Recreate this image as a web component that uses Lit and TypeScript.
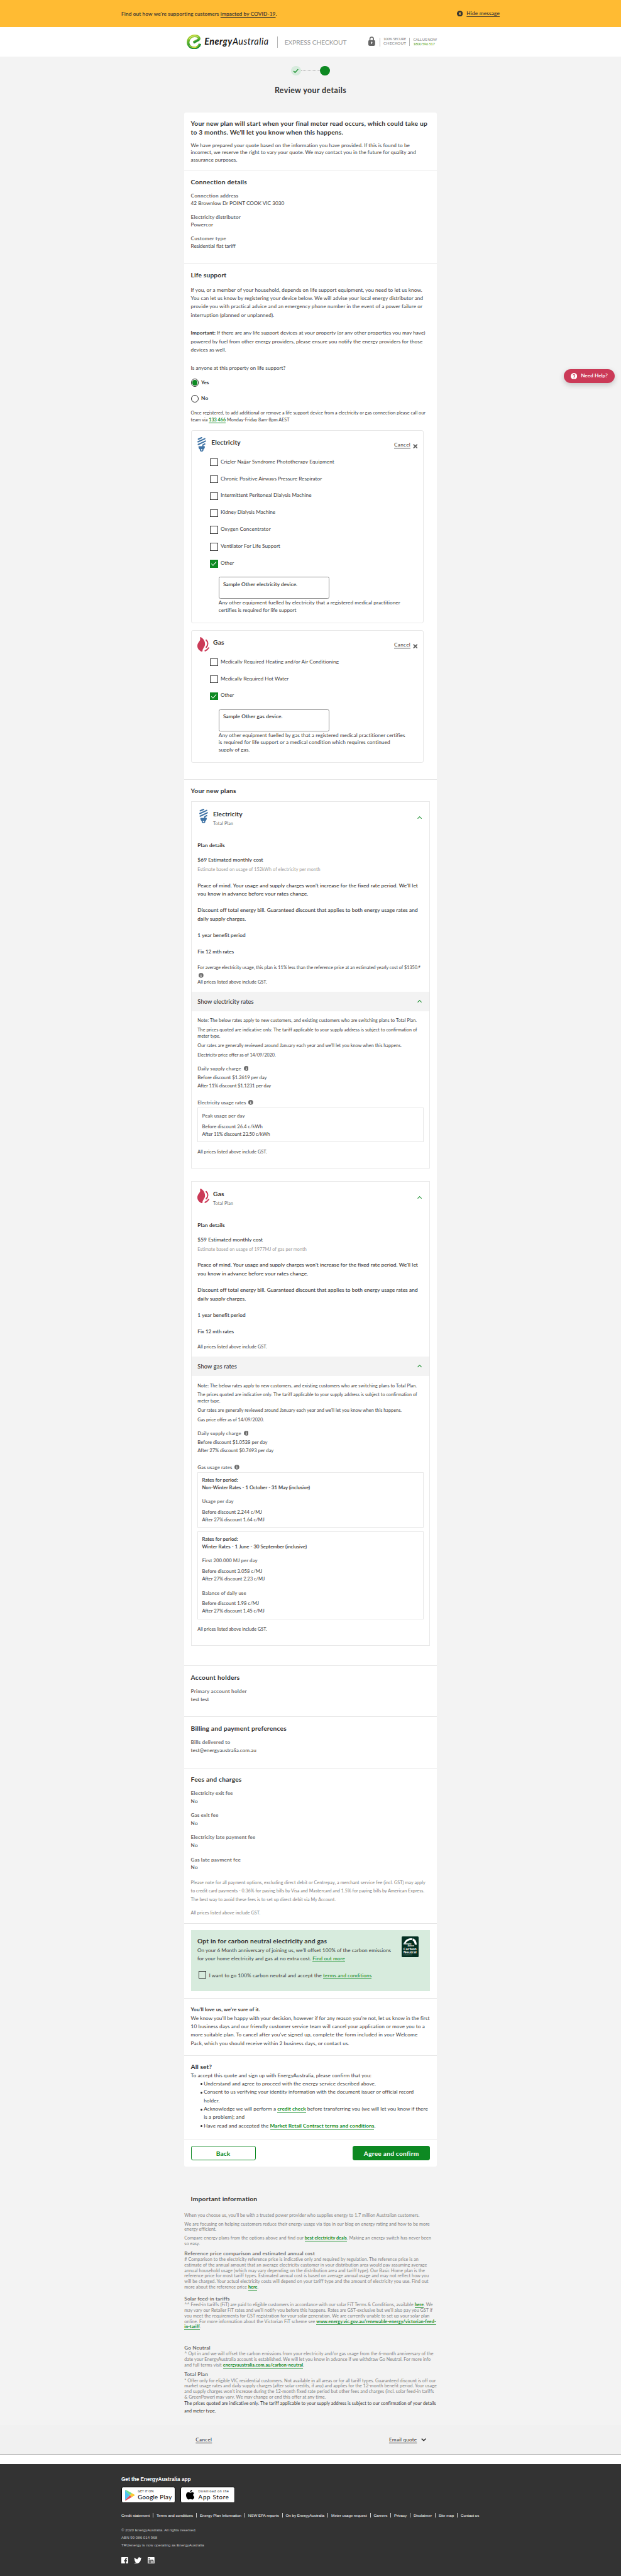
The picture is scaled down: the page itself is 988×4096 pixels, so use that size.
import { LitElement, html, css, svg, nothing, TemplateResult } from "lit";
import { customElement } from "lit/decorators.js";

type Content = string | TemplateResult;
type Line = [number, Content];

/** One line of copy with the measure it is set to. */
const fit = (w: number, content: Content, cls = "") =>
  html`<span class="fit ${cls}" data-w=${w}>${content}</span>`;
const lines = (cls: string, rows: Line[]) =>
  html`<p class=${cls}>${rows.map(([w, c]) => fit(w, c, "line"))}</p>`;

const plugIcon = html`<svg class="plug" viewBox="0 0 27 45">
  <g fill="none" stroke="#3f73a5" stroke-width="4" stroke-linecap="round" stroke-linejoin="round">
    <path d="M3.2 6.3 13.2 2M2.2 14.6 23 5M3 22.8 25 12.4M17 30v-5.5l6-3.2" />
    <circle cx="13.2" cy="39.3" r="3.9" stroke-width="3.6" />
  </g>
  <path fill="#3f73a5" d="M5 28h17q1.4 0 1.3 1.5c-.3 4.500-2.500 8-5.500 9H8.700c-3-1-5.200-4.500-5.300-9Q3.400 28 5 28z" />
  <path fill="#fff" d="M11.400 37.500h3.700v2.800q-1.800 2-3.700 0z" />
</svg>`;
const flameIcon = html`<svg class="flame" viewBox="0 0 37 45">
  <path fill="#cb3a57" d="M9.300.3C7.500 1 8.500 4 8.600 6.500 8.700 13 0 17 0 27.500 0 36 6.500 41.500 12.500 44.600c1.800.8 3.300.2 3.400-1.800C16.200 35 23.700 31 23.700 22 23.700 11 17.500 4.200 11.500.5 10.700.1 10 0 9.300.3z" />
  <path fill="none" stroke="#cb3a57" stroke-width="4" stroke-linecap="round" d="M27.300 9.200c6.200 6 6.200 15 .3 22.200M34.800 33.500c-2.800 4.200-6.200 7-10.500 8.800" />
</svg>`;
const infoIcon = html`<svg class="info" viewBox="0 0 16 16"><circle cx="8" cy="8" r="8" fill="#6b6b6b" /><path fill="#fff" d="M6.900 3h2.300v2.200H6.900zM6.200 6.600h3v4.600h.9v1.500H6v-1.500h.9V8.100h-.7z" /></svg>`;
const chevronUp = html`<svg class="chev" viewBox="0 0 14 8"><path d="M1 7.200 7 1.400l6 5.800" fill="none" stroke="#0d8922" stroke-width="2" /></svg>`;
const checkMark = svg`<path d="M4.500 12.500 9.500 17.500 19.500 6.500" fill="none" stroke="#fff" stroke-width="2" />`;

const box = (on: boolean) =>
  html`<span class="box ${on ? "on" : ""}">${on ? html`<svg viewBox="0 0 24 24">${checkMark}</svg>` : nothing}</span>`;

const field = (lw: number, label: string, vw: number, value: string) => html`
  <div class="field"><div class="label">${fit(lw, label)}</div><div>${fit(vw, value)}</div></div>`;

const device = (
  icon: TemplateResult, name: string, nameW: number,
  options: Line[], sampleW: number, sample: string, help: Line[]
) => html`
  <div class="device">
    <div class="device-head">
      ${icon}
      <h2>${fit(nameW, name)}</h2>
      <a class="cancel">${fit(50, html`<span class="u">Cancel</span>`)}</a>
      <svg class="cross" viewBox="0 0 15 14"><path d="M1.500 1 13.500 13M13.500 1 1.500 13" stroke="#666" stroke-width="3.400" /></svg>
    </div>
    <div class="options">
      ${options.map(([w, t], i) => html`<label class="option">${box(i === options.length - 1)}${fit(w, t)}</label>`)}
    </div>
    <div class="entry">${fit(sampleW, sample)}</div>
    ${lines("help", help)}
  </div>`;

interface Rate { title: Line; before: Line; after: Line }
interface Period { name?: Line; rates: Rate[] }
interface Plan {
  icon: TemplateResult; name: Line; cost: Line; estimate: Line; reference?: Content;
  show: Line; offer: Line; before: Line; after: Line; usage: Line; periods: Period[];
}

const gst = (w = 214.5) => fit(w, "All prices listed above include GST.", "line");

const plan = (p: Plan) => html`
  <div class="plan">
    <div class="plan-head">
      <div class="plan-icon">${p.icon}</div>
      <div><h2>${fit(...p.name)}</h2><div class="sub">${fit(62, "Total Plan")}</div></div>
      ${chevronUp}
    </div>
    <div class="plan-body">
      <h4>${fit(84, "Plan details")}</h4>
      <div class="cost">${fit(...p.cost)}</div>
      <div class="estimate">${fit(...p.estimate)}</div>
      ${lines("feature first", [
        [681, "Peace of mind. Your usage and supply charges won't increase for the fixed rate period. We'll let"],
        [341.5, "you know in advance before your rates change."],
      ])}
      ${lines("feature", [
        [680.5, "Discount off total energy bill. Guaranteed discount that applies to both energy usage rates and"],
        [149.5, "daily supply charges."],
      ])}
      ${lines("feature", [[148, "1 year benefit period"]])}
      ${lines("feature", [[112, "Fix 12 mth rates"]])}
      ${p.reference
        ? html`<div class="reference">${p.reference}</div>`
        : nothing}
      <div class="gst ${p.reference ? "" : "spaced"}">${gst()}</div>
    </div>
    <div class="bar">${fit(...p.show)}${chevronUp}</div>
    <div class="rates">
      ${lines("note", [[677.500, "Note: The below rates apply to new customers, and existing customers who are switching plans to Total Plan."]])}
      ${lines("note", [
        [678.500, "The prices quoted are indicative only. The tariff applicable to your supply address is subject to confirmation of"],
        [70, "meter type."],
      ])}
      ${lines("note", [[631, "Our rates are generally reviewed around January each year and we'll let you know when this happens."]])}
      ${lines("note", [p.offer])}
      <div class="rate-title supply">${fit(134.500, "Daily supply charge")}${infoIcon}</div>
      ${lines("supply-values", [p.before, p.after])}
      <div class="rate-title usage">${fit(...p.usage)}${infoIcon}</div>
      ${p.periods.map((d) => html`
        <div class="period">
          ${d.name ? lines("period-name", [[111, "Rates for period:"], d.name]) : nothing}
          ${d.rates.map((r) => html`
            <div class="rate-title">${fit(...r.title)}</div>
            ${lines("values", [r.before, r.after])}`)}
        </div>`)}
      <div class="gst last">${gst()}</div>
    </div>
  </div>`;

const electricityPlan: Plan = {
  icon: plugIcon,
  name: [90.5, "Electricity"],
  cost: [202.5, "$69 Estimated monthly cost"],
  estimate: [379.5, "Estimate based on usage of 152kWh of electricity per month"],
  reference: html`${fit(689, html`For average electricity usage, this plan is 11% less than the reference price at an estimated yearly cost of $1350.<sup>#</sup>`, "line")}<div class="ref-info">${infoIcon}</div>`,
  show: [173.5, "Show electricity rates"],
  offer: [241.5, "Electricity price offer as of 14/09/2020."],
  before: [214, "Before discount $1.2619 per day"],
  after: [227, "After 11% discount $1.1231 per day"],
  usage: [149.5, "Electricity usage rates"],
  periods: [{
    rates: [{
      title: [132, "Peak usage per day"],
      before: [187, "Before discount 26.4 c/kWh"],
      after: [210, "After 11% discount 23.50 c/kWh"],
    }],
  }],
};

const gasPlan: Plan = {
  icon: flameIcon,
  name: [34, "Gas"],
  cost: [201.5, "$59 Estimated monthly cost"],
  estimate: [337, "Estimate based on usage of 1977MJ of gas per month"],
  show: [121.5, "Show gas rates"],
  offer: [205, "Gas price offer as of 14/09/2020."],
  before: [216, "Before discount $1.0538 per day"],
  after: [235, "After 27% discount $0.7693 per day"],
  usage: [107, "Gas usage rates"],
  periods: [
    {
      name: [333.5, "Non-Winter Rates - 1 October - 31 May (inclusive)"],
      rates: [{ title: [97, "Usage per day"], before: [185, "Before discount 2.244 c/MJ"], after: [193, "After 27% discount 1.64 c/MJ"] }],
    },
    {
      name: [323.5, "Winter Rates - 1 June - 30 September (inclusive)"],
      rates: [
        { title: [171, "First 200.000 MJ per day"], before: [186, "Before discount 3.058 c/MJ"], after: [194, "After 27% discount 2.23 c/MJ"] },
        { title: [136, "Balance of daily use"], before: [176, "Before discount 1.98 c/MJ"], after: [193, "After 27% discount 1.45 c/MJ"] },
      ],
    },
  ],
};

const footerLinks: Line[] = [
  [88, "Credit statement"], [113, "Terms and conditions"], [128.500, "Energy Plan Information"], [95, "NSW EPA reports"],
  [120, "On by EnergyAustralia"], [110, "Meter usage request"], [42.5, "Careers"], [39, "Privacy"],
  [56.5, "Disclaimer"], [47.5, "Site map"], [57, "Contact us"],
];

@customElement("app-root")
export class AppRoot extends LitElement {
  static styles = css`
    :host { display: block; }
    *, *::before, *::after { box-sizing: border-box; }
    h1, h2, h3, h4, p, ul { margin: 0; padding: 0; }
    svg { display: block; flex: none; }
    .page { zoom: 0.514573; width: 100%; position: relative; background: #fff; color: #3c3c3c;
      font: 400 16px/23px Lato, "Open Sans", sans-serif; font-variant-ligatures: none; font-kerning: normal; }
    .fit { display: inline-block; white-space: nowrap; flex: none; vertical-align: top; margin: 1.3px 0 -1.3px; }
    .fit.line { display: block; width: fit-content; }
    p, li, .gst, .hcol, .two, .intro h2, .reference { display: flow-root; }
    .footer .fit { margin: 0; }
    .u { text-decoration: underline; text-underline-offset: 3px; }
    .g { color: #0d8922; border-bottom: 2px solid #0d8922; }
    .g.b { font-weight: 700; }

    .banner { height: 84px; background: #ffbb33; display: flex; padding: 0 375px; align-items: flex-start; color: #333; }
    .banner .fit { -webkit-text-stroke: 0.3px #333; }
    .banner .msg { margin-top: 30px; line-height: 24px; }
    .banner .hide { margin-top: 28px; line-height: 24px; }
    .hide-icon { width: 18px; height: 18px; margin: 33px 12px 0 0; }
    .banner .hide-wrap { margin-left: auto; display: flex; }

    .header { height: 90px; background: #fff; display: flex; align-items: flex-start; padding-left: 577px; }
    .logo { width: 45px; height: 46px; margin-top: 22px; }
    .brand { font-size: 28px; line-height: 30px; font-style: italic; color: #111; margin: 28px 0 0 10px; }
    .brand b { font-weight: 700; }
    .vr { width: 2px; background: #b5b5b5; flex: none; }
    .vr.a { height: 35px; margin: 28px 21px 0 26px; }
    .vr.c { height: 27px; margin: 32px 10px 0 13px; }
    .vr.d { height: 24px; margin: 33px 10px 0 10px; }
    .express { color: #999; font-size: 20px; line-height: 24px; margin-top: 34px; }
    .lock { width: 21px; height: 29px; margin: 29px 0 0 68px; }
    .hcol { line-height: 13px; font-size: 11.5px; color: #777; margin-top: 30.3px; }
    .hcol .two { font-size: 12.5px; }
    .hcol.call { margin-top: 31px; }
    .hcol.call .two { font-size: 12px; color: #58a618; margin-top: -1px; }

    .stage { height: 7319px; background: #f3f3f3; padding-top: 30px; }
    .steps { height: 30px; display: flex; justify-content: center; align-items: center; }
    .dot { width: 30px; height: 30px; border-radius: 50%; background: #0d8922; }
    .dot.done { background: #d7ebdd; }
    .dots { width: 60px; border-top: 2px dotted #aaa; }
    h1 { font-size: 24px; line-height: 36px; margin-top: 27px; text-align: center; color: #333; font-weight: 700; }
    h2 { font-size: 20px; line-height: 28px; font-weight: 700; color: #333; }
    h4 { font-size: 16px; line-height: 26px; font-weight: 700; color: #333; }

    .card { width: 780px; margin: 50px auto 0; background: #fff; border-radius: 6px; display: grid;
      grid-template-rows: 178px 288px 1595px 2739px 157.500px 158px 481px 231px 176px 260.500px 85px; }
    .card > section { border-top: 2px solid #e6e6e6; padding: 19px 20px 0; min-height: 0; }
    .card > section:first-child { border: 0; }
    .intro p { line-height: 22.2px; margin-top: 15.4px; }
    .field { margin-top: 20.6px; line-height: 23px; }
    h2 + .field { margin-top: 19px; }
    .loose .field { line-height: 24.600px; margin-top: 19px; }
    .loose h2 + .field { margin-top: 17px; }
    .label { color: #707070; font-weight: 700; }
    .body { line-height: 26px; }
    .support p + p { margin-top: 29.8px; }
    .support h2 + p { margin-top: 20.4px; }
    .radio { display: flex; height: 24px; line-height: 21px; gap: 8px; margin-top: 25px; font-weight: 700; color: #333; }
    p + .radio { margin-top: 21px; }
    .ring { width: 24px; height: 24px; border: 2px solid #333; border-radius: 50%; padding: 2px; }
    .ring.on::before { content: ""; display: block; width: 16px; height: 16px; border-radius: 50%; background: #0d8922; margin: 0; }
    .once { font-size: 14px; line-height: 22.6px; margin-top: 19.3px; }

    .device { width: 720px; border: 2px solid #e8e8e8; border-radius: 6px; height: 597px; padding: 19px 17px 0 19px; margin-top: 21.700px; }
    .device + .device { height: 410px; margin-top: 21px; }
    .device-head { display: flex; height: 66px; align-items: flex-start; }
    .plug { width: 27px; height: 45px; }
    .flame { width: 37px; height: 45px; }
    .device-head h2 { margin-left: 15.500px; }
    .flame + h2 { margin-left: 11px; }
    .cancel { margin: 13px 7px 0 auto; line-height: 20px; }
    .cross { width: 15px; height: 14px; margin-top: 20.6px; }
    .options { padding-left: 39px; display: flex; flex-direction: column; gap: 28.250px; }
    .option { display: flex; height: 24px; line-height: 19px; gap: 8px; }
    .box { width: 24px; height: 24px; border: 2px solid #333; flex: none; display: block; }
    .box.on { background: #0d8922; border: 0; }
    .entry { width: 343px; height: 68px; margin: 28.6px 0 0 65px; border: 2px solid #8c8c8c; border-radius: 5px; padding: 7px 0 0 12px; line-height: 24px; color: #333; -webkit-text-stroke: 0.3px #333; }
    .help { margin: 1px 0 0 65px; line-height: 22.100px; }

    .plan { border: 2px solid #e8e8e8; margin-top: 20px; }
    .plan + .plan { margin-top: 40px; }
    .plan-head { display: flex; height: 120.600px; padding: 20px 24px 0 19px; align-items: flex-start; }
    .plan-icon { width: 37px; margin-right: 11px; display: flex; justify-content: center; }
    .plan-head h2 { margin-top: 1px; }
    .sub { font-size: 14px; line-height: 20px; color: #6b6b6b; margin-top: 7.3px; }
    .chev { width: 14px; height: 8px; margin-left: auto; margin-top: 24px; }
    .plan-body { padding: 0 19px; height: 465.200px; }
    .plan + .plan .plan-body { height: 419.200px; }
    .cost { line-height: 26px; margin-top: 19px; color: #333; }
    .estimate { font-size: 14px; line-height: 20px; color: #999; margin-top: 6px; }
    .feature { line-height: 26.200px; margin-top: 24.600px; color: #333; }
    .feature.first { margin-top: 26.400px; }
    .feature, .cost { -webkit-text-stroke: 0.2px #333; }
    .reference { font-size: 14px; line-height: 20px; margin-top: 26.500px; }
    .reference sup { font-size: 11px; line-height: 0; vertical-align: 4px; }
    .ref-info { height: 24px; padding: 6px 0 0 4px; }
    .info { width: 15px; height: 15px; }
    .gst { font-size: 14px; line-height: 20px; }
    .gst.spaced { margin-top: 24.300px; }
    .gst.last { line-height: 19px; margin-top: 20px; }
    .bar { height: 60px; background: #f3f3f3; display: flex; align-items: center; padding: 0 24px 2px 19px; font-size: 18px; color: #333; -webkit-text-stroke: 0.2px #333; }
    .bar .chev { margin-top: 0; }
    .rates { padding: 19.400px 19px 40px; }
    .note { font-size: 14px; line-height: 19px; }
    .note + .note { margin-top: 10px; }
    .rate-title { font-size: 15px; line-height: 24px; font-weight: 700; color: #707070; display: flex; align-items: center; gap: 7.500px; }
    .supply { margin-top: 20.500px; }
    .supply-values { font-size: 15px; line-height: 24.300px; margin-top: 3px; }
    .usage { margin: 29.500px 0 3.500px; }
    .period { border: 2px solid #e8e8e8; padding: 10.500px 12px 12px; margin-bottom: 10.600px; font-size: 15px; }
    .period:nth-last-child(2) { margin-bottom: 0; }
    .period-name { line-height: 23px; color: #333; margin-bottom: 18.600px; -webkit-text-stroke: 0.3px #333; }
    .values { line-height: 23.200px; margin-top: 10.700px; }
    .values + .rate-title { margin-top: 19px; }

    .fees-note { font-size: 14px; line-height: 26.100px; color: #808080; margin-top: 21px; }
    .fees-note + .fees-note { margin-top: 15px; }
    .card > .offer { padding-top: 18.500px; }
    .carbon { height: 189.500px; background: #d7ebdd; padding: 19px 36px 0 20px; display: flex; justify-content: space-between; }
    .carbon p { line-height: 26px; margin-top: 2px; }
    .carbon .g { border-bottom-width: 1px; }
    .carbon label { display: flex; gap: 8px; margin: 26px 0 0 4px; line-height: 25px; }
    .badge { width: 53px; height: 65px; margin-top: 1px; background: #042f22; border-radius: 3px; color: #fff; overflow: hidden; }
    .badge svg { width: 53px; height: 20px; margin-top: 5px; }
    .badge div { padding-left: 6px; font-family: "Open Sans", sans-serif; font-weight: 700; }
    .badge .s { font-size: 6.5px; line-height: 6px; margin-top: -5px; }
    .badge .s + .s { margin-top: 0; padding-left: 19px; }
    .badge .l { font-size: 11px; line-height: 10px; margin-top: 1px; }
    .badge .t { font-size: 4.500px; line-height: 8px; margin-top: 1px; }
    .badge .l + .l { margin-top: 0; }
    .love h4 { line-height: 24px; }
    .love p { line-height: 26px; margin-top: 3.400px; }
    .set ul { list-style: none; padding-left: 40px; line-height: 26px; }
    .set p { line-height: 26px; }
    .set li { position: relative; }
    .set li::before { content: ""; position: absolute; left: -10px; top: 12px; width: 5px; height: 6px; border-radius: 50%; background: #333; }
    .card > .actions { display: flex; justify-content: space-between; align-items: flex-start; }
    .btn { height: 44.500px; border-radius: 6px; width: 200px; border: 2px solid #0d8922; color: #0d8922; font-weight: 700; font-size: 20px; line-height: 39px; text-align: center; }
    .btn.primary { width: 240px; background: #0d8922; color: #fff; }

    .legal { width: 780px; margin: 83.300px auto 0; font-size: 14px; line-height: 17px; color: #808080; }
    .legal h2 { padding-left: 20px; margin-bottom: 29.700px; }
    .legal p + p { margin-top: 10px; }
    .legal h3 { font-size: 16px; line-height: 20px; font-weight: 700; color: #707070; margin: 9.800px 0 2px; }
    .legal h3.s { margin-top: 16.800px; }
    .legal h3.n { margin-top: 43.800px; }
    .legal p.dark { line-height: 23px; color: #333; margin-top: -1px; }

    .quote { height: 92px; background: #f1f1f1; border-bottom: 2px solid #aaa; display: flex; padding: 34.400px 603px 0 605px; align-items: flex-start; line-height: 20px; color: #333; }
    .quote .email { margin-left: auto; }
    .down { width: 16px; height: 9px; margin: 8px 0 0 12px; }

    .footer { margin-top: 29px; height: 346px; background: #333; padding: 38.500px 375px 0; color: #fff; font: 12px/14px "Liberation Sans", Arial, sans-serif; }
    .get { font-size: 16px; line-height: 20px; font-weight: 700; }
    .stores { display: flex; gap: 16px; margin-top: 12.500px; }
    .store { width: 167.500px; height: 50px; background: #fff; border: 2px solid #000; border-radius: 6px; color: #000; display: flex; align-items: center; font-family: "Open Sans", sans-serif; padding-left: 10px; }
    .store .play { width: 30px; height: 33px; margin-right: 9px; }
    .store .apple { width: 26px; height: 31px; margin: 0 12px 0 5px; }
    .store .k { font-size: 10px; line-height: 12px; display: block; }
    .store .n { font-size: 19px; line-height: 21px; display: block; font-family: Lato, sans-serif; }
    .links { display: flex; margin: 30.800px -30px 0 0; }
    .links a { padding-right: 10px; }
    .links a + a { border-left: 2px solid #ccc; padding-left: 9px; }
    .small { line-height: 23px; color: #c4c4c4; margin-top: 27.500px; }
    .social { display: flex; margin-top: 24.700px; gap: 18.500px; align-items: flex-start; }
    .social svg { width: 21px; height: 21px; }
    .social .tw { width: 24px; }

    .need { position: absolute; left: 1743px; top: 1140px; width: 157px; height: 44px; border-radius: 22px; background: #cb3a57; color: #fff; display: flex; align-items: center; padding: 0 0 1px 22px; gap: 11px; font-weight: 700; box-shadow: 0 6px 16px rgba(0, 0, 0, 0.2); }
    .need svg { width: 20px; height: 20px; }
  `;

  firstUpdated() {
    this.justify();
  }

  /** Tracks every line out (or in) to its measure. */
  private justify() {
    const root = this.renderRoot as ShadowRoot;
    const unit = root.querySelector(".page")!.getBoundingClientRect().width / 1920;
    const items = Array.from(root.querySelectorAll<HTMLElement>(".fit"));
    const spacing = items.map(() => 0);
    for (let pass = 0; pass < 3; pass++) {
      const widths = items.map((el) => el.getBoundingClientRect().width / unit);
      items.forEach((el, i) => {
        const n = (el.textContent || "").length;
        if (n < 2) return;
        spacing[i] += (Number(el.dataset.w) + spacing[i] - widths[i]) / (pass ? n : n - 1);
        el.style.letterSpacing = `${spacing[i].toFixed(4)}px`;
      });
    }
  }

  render() {
    return html`
      <div class="page">
        <div class="banner">
          <div class="msg">${fit(481, html`Find out how we're supporting customers <span class="u">impacted by COVID-19</span>.`)}</div>
          <div class="hide-wrap">
            <svg class="hide-icon" viewBox="0 0 18 18"><circle cx="9" cy="9" r="9" fill="#333" /><path d="M6 6l6 6M12 6l-6 6" stroke="#ffbb33" stroke-width="2.800" /></svg>
            <div class="hide">${fit(102, html`<span class="u">Hide message</span>`)}</div>
          </div>
        </div>

        <div class="header">
          <svg class="logo" viewBox="0 0 45 46">
            <defs>
              <linearGradient id="e1" x1="0" y1="0" x2="0.300" y2="1"><stop offset="0" stop-color="#c3d82e" /><stop offset="0.450" stop-color="#5fb52c" /><stop offset="1" stop-color="#1f8f3a" /></linearGradient>
              <linearGradient id="e2" x1="0" y1="0" x2="1" y2="0"><stop offset="0" stop-color="#8cc63f" /><stop offset="0.600" stop-color="#e6e329" /><stop offset="1" stop-color="#4fae32" /></linearGradient>
            </defs>
            <path d="M21 24.500 36 16.500C41 13 38 4 25 4 12 4 4.500 14 4.500 24c0 10 7.500 17.500 19 17.500 9 0 16-6 17.500-13" fill="none" stroke="url(#e1)" stroke-width="8" stroke-linejoin="round" />
            <path d="M9 33c4 6 10 7 15.500 6.500 7-.6 12-4.500 14.500-10.500" fill="none" stroke="url(#e2)" stroke-width="3.500" />
            <path d="M36 8C30 1.500 13 2 7 15" fill="none" stroke="#e4ef9a" stroke-width="1.800" />
            <path d="M21 25.500 37 17" fill="none" stroke="#1c8a3b" stroke-width="3" />
          </svg>
          <div class="brand">${fit(198, html`<b>Energy</b>Australia`)}</div>
          <div class="vr a"></div>
          <div class="express">${fit(192, "EXPRESS CHECKOUT")}</div>
          <svg class="lock" viewBox="0 0 21 29"><path d="M5 13V7.500a5.500 5.500 0 0 1 11 0V13" fill="none" stroke="#666" stroke-width="3" /><rect y="11" width="21" height="18" rx="4" fill="#666" /><path d="M10.500 16a2.200 2.200 0 0 1 1.200 4v3.500H9.300V20a2.200 2.200 0 0 1 1.200-4z" fill="#fff" /></svg>
          <div class="vr c"></div>
          <div class="hcol">${fit(70, "100% SECURE", "line")}<div class="two">${fit(70, "CHECKOUT", "line")}</div></div>
          <div class="vr d"></div>
          <div class="hcol call">${fit(73, "CALL US NOW", "line")}<div class="two">${fit(67, "1800 596 517", "line")}</div></div>
        </div>

        <div class="stage">
          <div class="steps">
            <div class="dot done"><svg viewBox="0 0 30 30"><path d="M8 15.500 12.500 20 22 10" fill="none" stroke="#0d8922" stroke-width="2.400" /></svg></div>
            <div class="dots"></div>
            <div class="dot"></div>
          </div>
          <h1>${fit(221, "Review your details")}</h1>

          <div class="card">
            <section class="intro">
              <h2>${fit(731, "Your new plan will start when your final meter read occurs, which could take up", "line")}${fit(471, "to 3 months. We'll let you know when this happens.", "line")}</h2>
              ${lines("", [
                [677, "We have prepared your quote based on the information you have provided. If this is found to be"],
                [696, "incorrect, we reserve the right to vary your quote. We may contact you in the future for quality and"],
                [143.500, "assurance purposes."],
              ])}
            </section>

            <section>
              <h2>${fit(173.500, "Connection details")}</h2>
              ${field(147, "Connection address", 289, "42 Brownlow Dr POINT COOK VIC 3030")}
              ${field(154, "Electricity distributor", 69, "Powercor")}
              ${field(109, "Customer type", 138.500, "Residential flat tariff")}
            </section>

            <section class="support">
              <h2>${fit(110, "Life support")}</h2>
              ${lines("body", [
                [715.500, "If you, or a member of your household, depends on life support equipment, you need to let us know."],
                [718, "You can let us know by registering your device below. We will advise your local energy distributor and"],
                [716, "provide you with practical advice and an emergency phone number in the event of a power failure or"],
                [257.500, "interruption (planned or unplanned)."],
              ])}
              ${lines("body", [
                [724.500, html`<b>Important:</b> If there are any life support devices at your property (or any other properties you may have)`],
                [716.500, "powered by fuel from other energy providers, please ensure you notify the energy providers for those"],
                [109, "devices as well."],
              ])}
              ${lines("body", [[292.500, "Is anyone at this property on life support?"]])}
              <label class="radio"><span class="ring on"></span>${fit(24, "Yes")}</label>
              <label class="radio"><span class="ring"></span>${fit(21.500, "No")}</label>
              ${lines("once", [
                [725.500, "Once registered, to add additional or remove a life support device from a electricity or gas connection please call our"],
                [305, html`team via <span class="g b">133 466</span> Monday-Friday 8am-8pm AEST`],
              ])}
              ${device(plugIcon, "Electricity", 90.500, [
                [351.500, "Crigler Najjar Syndrome Phototherapy Equipment"],
                [313.500, "Chronic Positive Airways Pressure Respirator"],
                [281, "Intermittent Peritoneal Dialysis Machine"],
                [169.500, "Kidney Dialysis Machine"],
                [155, "Oxygen Concentrator"],
                [184.500, "Ventilator For Life Support"],
                [41.500, "Other"],
              ], 229.500, "Sample Other electricity device.", [
                [561.500, "Any other equipment fuelled by electricity that a registered medical practitioner"],
                [240.500, "certifies is required for life support"],
              ])}
              ${device(flameIcon, "Gas", 34, [
                [365.500, "Medically Required Heating and/or Air Conditioning"],
                [210.500, "Medically Required Hot Water"],
                [41.500, "Other"],
              ], 183.500, "Sample Other gas device.", [
                [576.500, "Any other equipment fuelled by gas that a registered medical practitioner certifies"],
                [530, "is required for life support or a medical condition which requires continued"],
                [96, "supply of gas."],
              ])}
            </section>

            <section>
              <h2>${fit(140, "Your new plans")}</h2>
              ${plan(electricityPlan)}
              ${plan(gasPlan)}
            </section>

            <section class="loose">
              <h2>${fit(151, "Account holders")}</h2>
              ${field(173, "Primary account holder", 56, "test test")}
            </section>

            <section class="loose">
              <h2>${fit(295.500, "Billing and payment preferences")}</h2>
              ${field(121.500, "Bills delivered to", 202.500, "test@energyaustralia.com.au")}
            </section>

            <section class="loose">
              <h2>${fit(157, "Fees and charges")}</h2>
              ${field(130, "Electricity exit fee", 21.500, "No")}
              ${field(85, "Gas exit fee", 21.500, "No")}
              ${field(199.500, "Electricity late payment fee", 21.500, "No")}
              ${field(154, "Gas late payment fee", 21.500, "No")}
              ${lines("fees-note", [
                [725, "Please note for all payment options, excluding direct debit or Centrepay, a merchant service fee (incl. GST) may apply"],
                [722, "to credit card payments - 0.36% for paying bills by Visa and Mastercard and 1.5% for paying bills by American Express."],
                [448, "The best way to avoid these fees is to set up direct debit via My Account."],
              ])}
              <p class="fees-note">${gst(215)}</p>
            </section>

            <section class="offer">
              <div class="carbon">
                <div>
                  <h2>${fit(400.500, "Opt in for carbon neutral electricity and gas")}</h2>
                  ${lines("", [
                    [599, "On your 6 Month anniversary of joining us, we’ll offset 100% of the carbon emissions"],
                    [456.500, html`for your home electricity and gas at no extra cost. <span class="g">Find out more</span>`],
                  ])}
                  <label>${box(false)}${fit(503, html`I want to go 100% carbon neutral and accept the <span class="g">terms and conditions</span>`)}</label>
                </div>
                <div class="badge">
                  <svg viewBox="0 0 53 20"><path d="M7 17C10 5 19 0 30 0l4 0-3 6C22 5.500 15 9 12 17zM33 6l3-5.500C43 4 47 10 47 25H41C41 16 39 10 33 6z" fill="#fff" /></svg>
                  <div class="s">Climate</div><div class="s">Active</div>
                  <div class="l">${fit(41, "Carbon")}</div><div class="l">${fit(41, "Neutral")}</div>
                  <div class="t">${fit(27, "PRODUCT")}</div>
                </div>
              </div>
            </section>

            <section class="love">
              <h4>${fit(214, "You'll love us, we're sure of it.")}</h4>
              ${lines("", [
                [738, "We know you'll be happy with your decision, however if for any reason you're not, let us know in the first"],
                [723.500, "10 business days and our friendly customer service team will cancel your application or move you to a"],
                [701, "more suitable plan. To cancel after you've signed up, complete the form included in your Welcome"],
                [489.500, "Pack, which you should receive within 2 business days, or contact us."],
              ])}
            </section>

            <section class="set">
              <h2>${fit(65, "All set?")}</h2>
              ${lines("", [[558, "To accept this quote and sign up with EnergyAustralia, please confirm that you:"]])}
              <ul>
                <li>${fit(532, "Understand and agree to proceed with the energy service described above.", "line")}</li>
                <li>${fit(649, "Consent to us verifying your identity information with the document issuer or official record", "line")}${fit(49, "holder.", "line")}</li>
                <li>${fit(693, html`Acknowledge we will perform a <span class="g b">credit check</span> before transferring you (we will let you know if there`, "line")}${fit(126, "is a problem); and", "line")}</li>
                <li>${fit(531, html`Have read and accepted the <span class="g b">Market Retail Contract terms and conditions</span>.`, "line")}</li>
              </ul>
            </section>

            <section class="actions">
              <div class="btn">${fit(44, "Back")}</div>
              <div class="btn primary">${fit(170, "Agree and confirm")}</div>
            </section>
          </div>

          <div class="legal">
            <h2>${fit(205, "Important information")}</h2>
            ${lines("", [[727, "When you choose us, you’ll be with a trusted power provider who supplies energy to 1.7 million Australian customers."]])}
            ${lines("", [
              [758.500, "We are focusing on helping customers reduce their energy usage via tips in our blog on energy rating and how to be more"],
              [99, "energy efficient."],
            ])}
            ${lines("", [
              [763, html`Compare energy plans from the options above and find our <span class="g b">best electricity deals</span>. Making an energy switch has never been`],
              [48, "so easy."],
            ])}
            <h3>${fit(403, "Reference price comparison and estimated annual cost")}</h3>
            ${lines("", [
              [724, "# Comparison to the electricity reference price is indicative only and required by regulation. The reference price is an"],
              [750, "estimate of the annual amount that an average electricity customer in your distribution area would pay assuming average"],
              [744, "annual household usage (which may vary depending on the distribution area and tariff type). Our Basic Home plan is the"],
              [756, "reference price for most tariff types. Estimated annual cost is based on average annual usage and may not reflect how you"],
              [754.500, "will be charged. Your actual electricity costs will depend on your tariff type and the amount of electricity you use. Find out"],
              [229, html`more about the reference price <span class="g b">here</span>.`],
            ])}
            <h3 class="s">${fit(140, "Solar feed-in tariffs")}</h3>
            ${lines("", [
              [768, html`^^ Feed-in tariffs (FiT) are paid to eligible customers in accordance with our solar FiT Terms & Conditions, available <span class="g b">here</span>. We`],
              [767, "may vary our Retailer FiT rates and we'll notify you before this happens. Rates are GST-exclusive but we'll also pay you GST if"],
              [758, "you meet the requirements for GST registration for your solar generation. We are currently unable to set up your solar plan"],
              [778, html`online. For more information about the Victorian FiT scheme see <span class="g b">www.energy.vic.gov.au/renewable-energy/victorian-feed-</span>`],
              [51, html`<span class="g b">in-tariff</span>.`],
            ])}
            <h3 class="n">${fit(80, "Go Neutral")}</h3>
            ${lines("", [
              [770, "^ Opt in and we will offset the carbon emissions from your electricity and/or gas usage from the 6-month anniversary of the"],
              [761.500, "date your EnergyAustralia account is established. We will let you know in advance if we withdraw Go Neutral. For more info"],
              [370, html`and full terms visit <span class="g b">energyaustralia.com.au/carbon-neutral</span>.`],
            ])}
            <h3>${fit(73, "Total Plan")}</h3>
            ${lines("", [
              [777.500, "* Offer only for eligible VIC residential customers. Not available in all areas or for all tariff types. Guaranteed discount is off our"],
              [780, "market usage rates and daily supply charges (after solar credits, if any) and applies for the 12-month benefit period. Your usage"],
              [771.500, "and supply charges won't increase during the 12-month fixed rate period but other fees and charges (incl. solar feed-in tariffs"],
              [437, "& GreenPower) may vary. We may change or end this offer at any time."],
            ])}
            ${lines("dark", [
              [778, "The prices quoted are indicative only. The tariff applicable to your supply address is subject to our confirmation of your details"],
              [97.500, "and meter type."],
            ])}
          </div>
        </div>

        <div class="quote">
          ${fit(50, html`<span class="u">Cancel</span>`)}
          <div class="email">${fit(86, html`<span class="u">Email quote</span>`)}</div>
          <svg class="down" viewBox="0 0 16 9"><path d="M1.500 1.200 8 7.300l6.500-6.100" fill="none" stroke="#333" stroke-width="3" /></svg>
        </div>

        <div class="footer">
          <div class="get">${fit(215, "Get the EnergyAustralia app")}</div>
          <div class="stores">
            <div class="store">
              <svg class="play" viewBox="0 0 30 33"><path d="M0 1v31l15-15.500z" fill="#4fc3f0" /><path d="M0 1l15 15.500 6-6.500L3 .3Q1-.5 0 1z" fill="#6be08a" /><path d="M0 32l15-15.500 6 6L3 32.700Q1 33.500 0 32z" fill="#ea4f5a" /><path d="M21 10l7.500 4.500q2.500 1.800 0 3.600L21 22.500l-6-6z" fill="#fcc934" /></svg>
              <div><span class="k">${fit(49, "GET IT ON")}</span><span class="n">${fit(105, "Google Play")}</span></div>
            </div>
            <div class="store">
              <svg class="apple" viewBox="0 0 26 31"><path d="M18.500 0c.3 3.500-2.500 7-6 7-.3-3.400 2.700-6.600 6-7zM25 10.500c-4.500 2.800-3.800 9.200 1 11.200-1 3.300-3.900 8.300-6.700 8.300-2.200 0-3-1.300-5.600-1.300-2.500 0-3.400 1.300-5.500 1.300C4.500 30 0 23 0 16.500 0 10.500 3.700 7.500 7.500 7.500c2.400 0 4.300 1.500 5.800 1.500 1.400 0 3.500-1.700 6.400-1.600 2.200.1 4.100 1.100 5.300 3.100z" /></svg>
              <div><span class="k">${fit(94, "Download on the")}</span><span class="n">${fit(94, "App Store")}</span></div>
            </div>
          </div>
          <div class="links">${footerLinks.map(([w, t]) => html`<a>${fit(w, t)}</a>`)}</div>
          ${lines("small", [
            [232, "© 2020 EnergyAustralia. All rights reserved."],
            [111, "ABN 99 086 014 968"],
            [256, "TRUenergy is now operating as EnergyAustralia"],
          ])}
          <div class="social">
            <svg viewBox="0 0 21 21"><path fill="#fff" d="M1.200 0h18.600Q21 0 21 1.200v18.600q0 1.200-1.200 1.200h-5.300v-8.100h2.700l.4-3.200h-3.100V7.700c0-.9.300-1.500 1.600-1.500h1.700V3.300c-.3 0-1.300-.1-2.400-.1-2.500 0-4.100 1.500-4.100 4.200v2.300H8.500v3.200h2.800V21H1.200Q0 21 0 19.800V1.200Q0 0 1.200 0z" /></svg>
            <svg class="tw" viewBox="0 0 24 21"><path fill="#fff" d="M24 2.800c-.9.400-1.800.7-2.800.8 1-.6 1.800-1.600 2.200-2.700-1 .6-2 1-3.100 1.200A4.900 4.900 0 0 0 12 6.500C7.900 6.300 4.300 4.300 1.900 1.400.6 3.600 1.200 6.500 3.400 8c-.8 0-1.600-.2-2.200-.6 0 2.300 1.600 4.400 3.900 4.900-.7.200-1.500.2-2.200.1.600 2 2.400 3.400 4.600 3.400A9.900 9.900 0 0 1 .2 17.800 14 14 0 0 0 21.500 5.300c1-.7 1.800-1.500 2.500-2.500z" /></svg>
            <svg viewBox="0 0 21 21"><path fill="#fff" fill-rule="evenodd" d="M1.500 0h18Q21 0 21 1.500v18q0 1.500-1.500 1.500h-18Q0 21 0 19.500v-18Q0 0 1.500 0zM3 8v10h3.200V8zM4.600 3a1.800 1.800 0 1 0 0 3.600 1.800 1.800 0 0 0 0-3.600zM8.300 8v10h3.100v-5c0-1.300.3-2.600 1.900-2.600s1.600 1.500 1.600 2.700V18H18v-5.500c0-2.700-.6-4.800-3.700-4.800-1.500 0-2.500.8-2.900 1.600V8z" /></svg>
          </div>
        </div>

        <div class="need">
          <svg viewBox="0 0 20 20"><circle cx="10" cy="10" r="10" fill="#fff" /><path d="M7 8a3 3 0 1 1 4.500 2.600Q10 11.500 10 13" fill="none" stroke="#cb3a57" stroke-width="2" /><circle cx="10" cy="15.500" r="1.300" fill="#cb3a57" /></svg>
          ${fit(83, "Need Help?")}
        </div>
      </div>
    `;
  }
}
